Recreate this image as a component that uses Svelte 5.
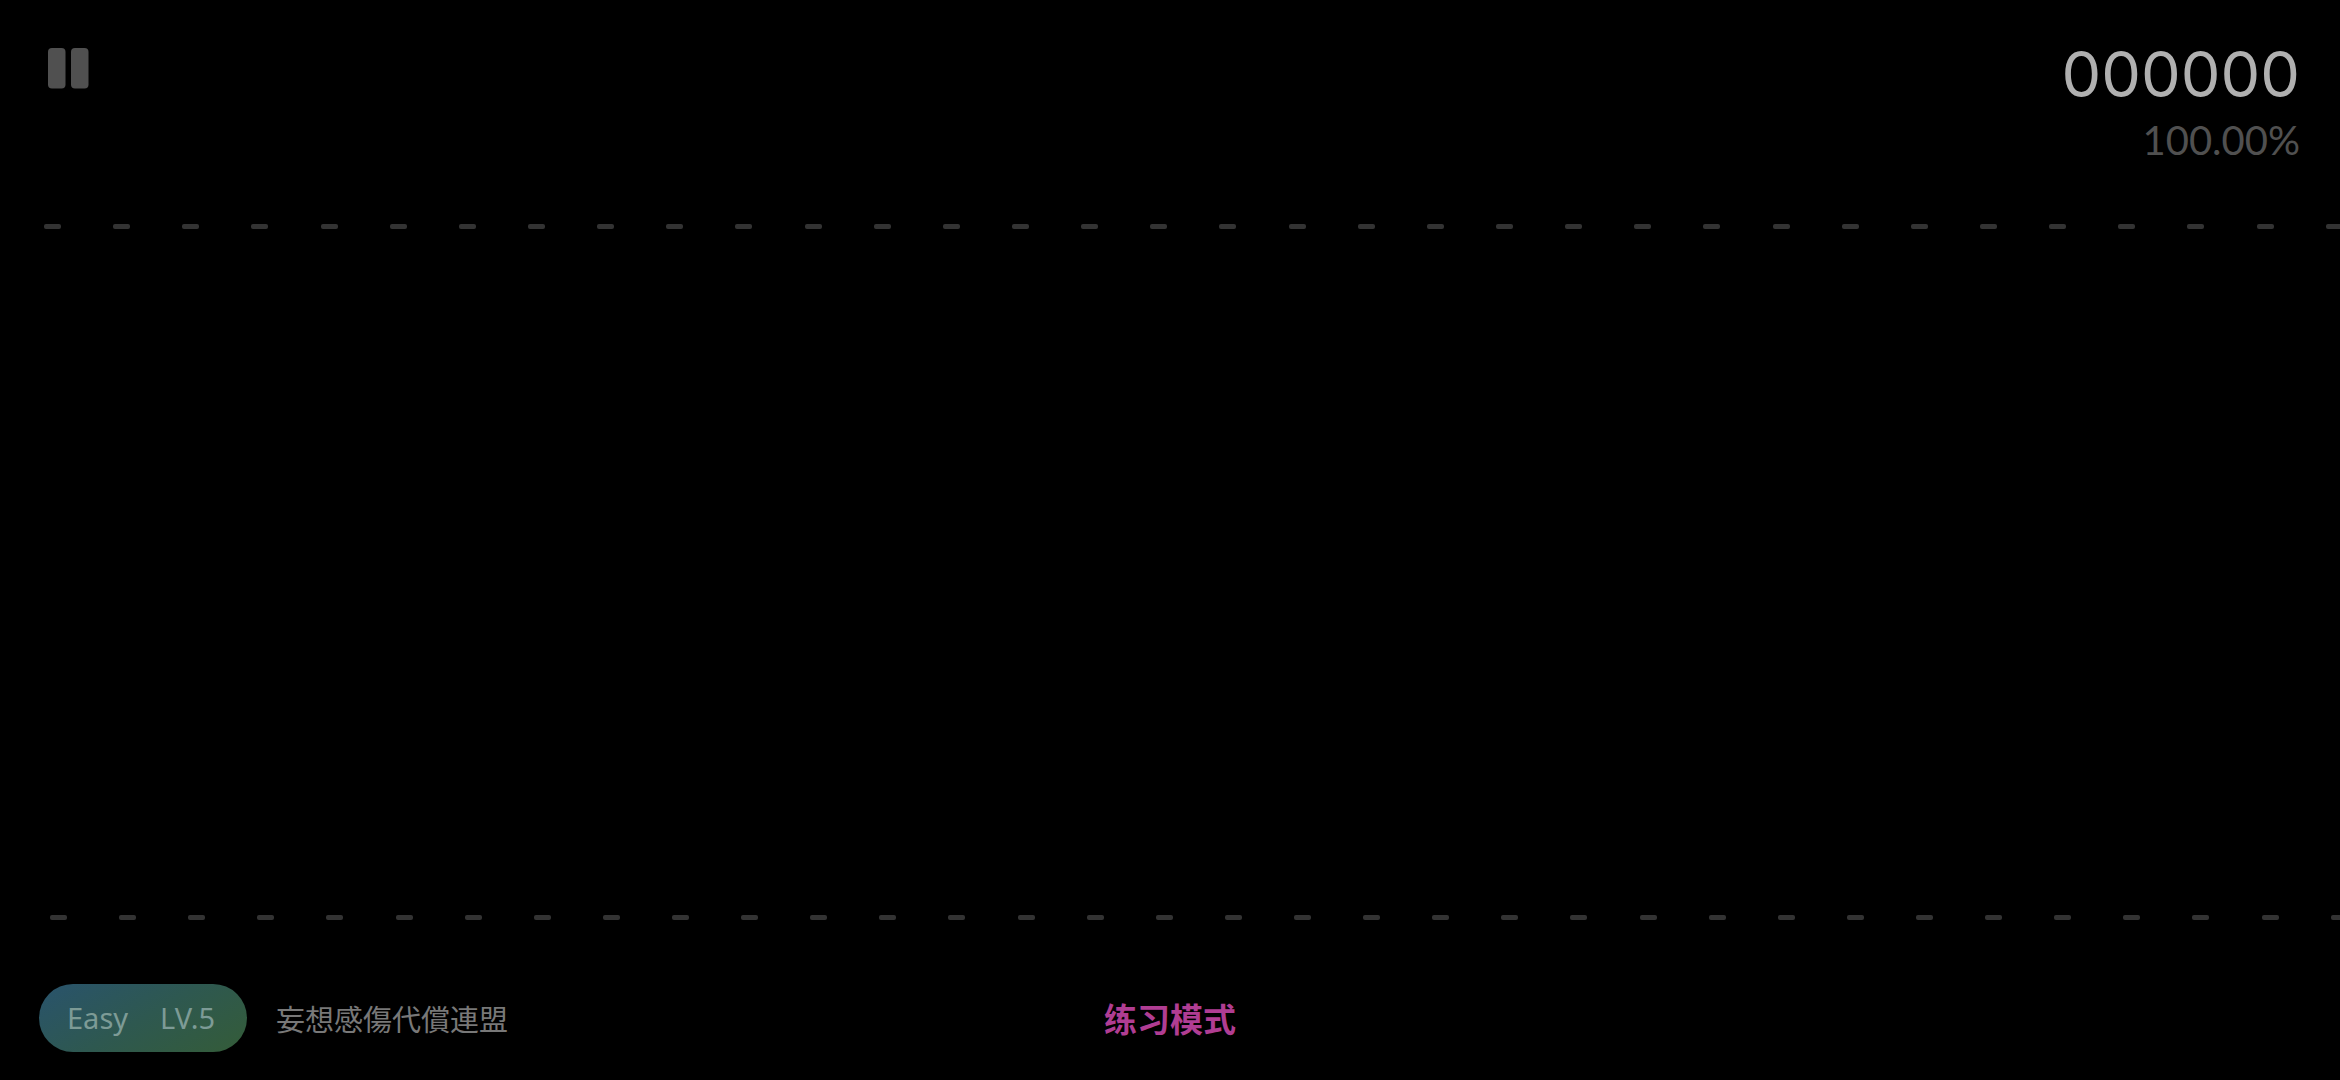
<script lang="ts">
  const ticks = Array.from({ length: 34 }, (_, i) => i);

  let score = $state(0);
  let accuracy = $state(100);
  let paused = $state(false);

  const song = { title: "妄想感傷代償連盟", difficulty: "Easy", level: 5 };
</script>

<main class="game">
  <header class="top">
    <button class="pause" aria-label="Pause" aria-pressed={paused} onclick={() => (paused = !paused)}>
      <svg width="41" height="41" viewBox="0 0 41 41" fill="currentColor">
        <rect x="0" y="0" width="17.5" height="40.5" rx="4" />
        <rect x="23" y="0" width="17.5" height="40.5" rx="4" />
      </svg>
    </button>
    <div class="stats">
      <div class="score">{String(score).padStart(6, "0")}</div>
      <div class="accuracy">{accuracy.toFixed(2)}%</div>
    </div>
  </header>

  <section class="field">
    <div class="rail upper">
      {#each ticks as tick (tick)}
        <span class="tick"></span>
      {/each}
    </div>
    <div class="rail lower">
      {#each ticks as tick (tick)}
        <span class="tick"></span>
      {/each}
    </div>
  </section>

  <footer class="bottom">
    <div class="song">
      <div class="badge">
        <span>{song.difficulty}</span>
        <span>LV.{song.level}</span>
      </div>
      <div class="title" lang="ja">{song.title}</div>
    </div>
    <div class="mode" lang="zh-CN">练习模式</div>
  </footer>
</main>

<style>
  :global(body) {
    margin: 0;
    background: #000;
  }
  .game {
    box-sizing: border-box;
    display: flex;
    flex-direction: column;
    min-height: 100vh;
    overflow: hidden;
    background: #000;
    font-family: Lato, "Noto Sans CJK JP", sans-serif;
  }
  .top {
    display: flex;
    justify-content: space-between;
    align-items: flex-start;
    height: 176px;
    padding: 48px 40px 0 48px;
  }
  .pause {
    display: flex;
    padding: 0;
    border: none;
    background: none;
    color: #505050;
    cursor: pointer;
  }
  .stats {
    text-align: right;
  }
  .score {
    color: #b0b0b0;
    font-family: Inter, sans-serif;
    font-size: 63px;
    font-weight: 400;
    line-height: 52px;
  }
  .accuracy {
    margin-top: 20px;
    color: #505050;
    font-size: 40px;
    line-height: 40px;
  }
  .field {
    flex: 1;
    display: flex;
    flex-direction: column;
    justify-content: space-between;
  }
  .rail {
    display: flex;
    justify-content: space-between;
  }
  /* the rails run out past the right edge of the field */
  .upper {
    margin: 0 -3px 0 44px;
  }
  .lower {
    margin: 0 -8px 0 50px;
  }
  .tick {
    width: 17px;
    height: 5px;
    border-radius: 2px;
    background: #333;
  }
  .bottom {
    display: grid;
    grid-template-columns: 1fr auto 1fr;
    align-items: center;
    padding: 64px 39px 28px;
  }
  .song {
    display: flex;
    align-items: center;
    gap: 29px;
  }
  .badge {
    display: flex;
    align-items: center;
    gap: 32px;
    height: 68px;
    padding: 0 32px 0 28px;
    border-radius: 34px;
    background: linear-gradient(150deg, #29536c, #2e5850 50%, #345c38);
    color: #7d9b96;
    font-family: "Noto Sans", sans-serif;
    font-size: 29px;
    line-height: 40px;
  }
  .title {
    color: #787878;
    font-family: "Noto Sans CJK JP", sans-serif;
    font-size: 29px;
    line-height: 40px;
  }
  .mode {
    color: #b03d93;
    font-family: "Noto Sans CJK SC", sans-serif;
    font-size: 33px;
    font-weight: 700;
    line-height: 40px;
  }
</style>
